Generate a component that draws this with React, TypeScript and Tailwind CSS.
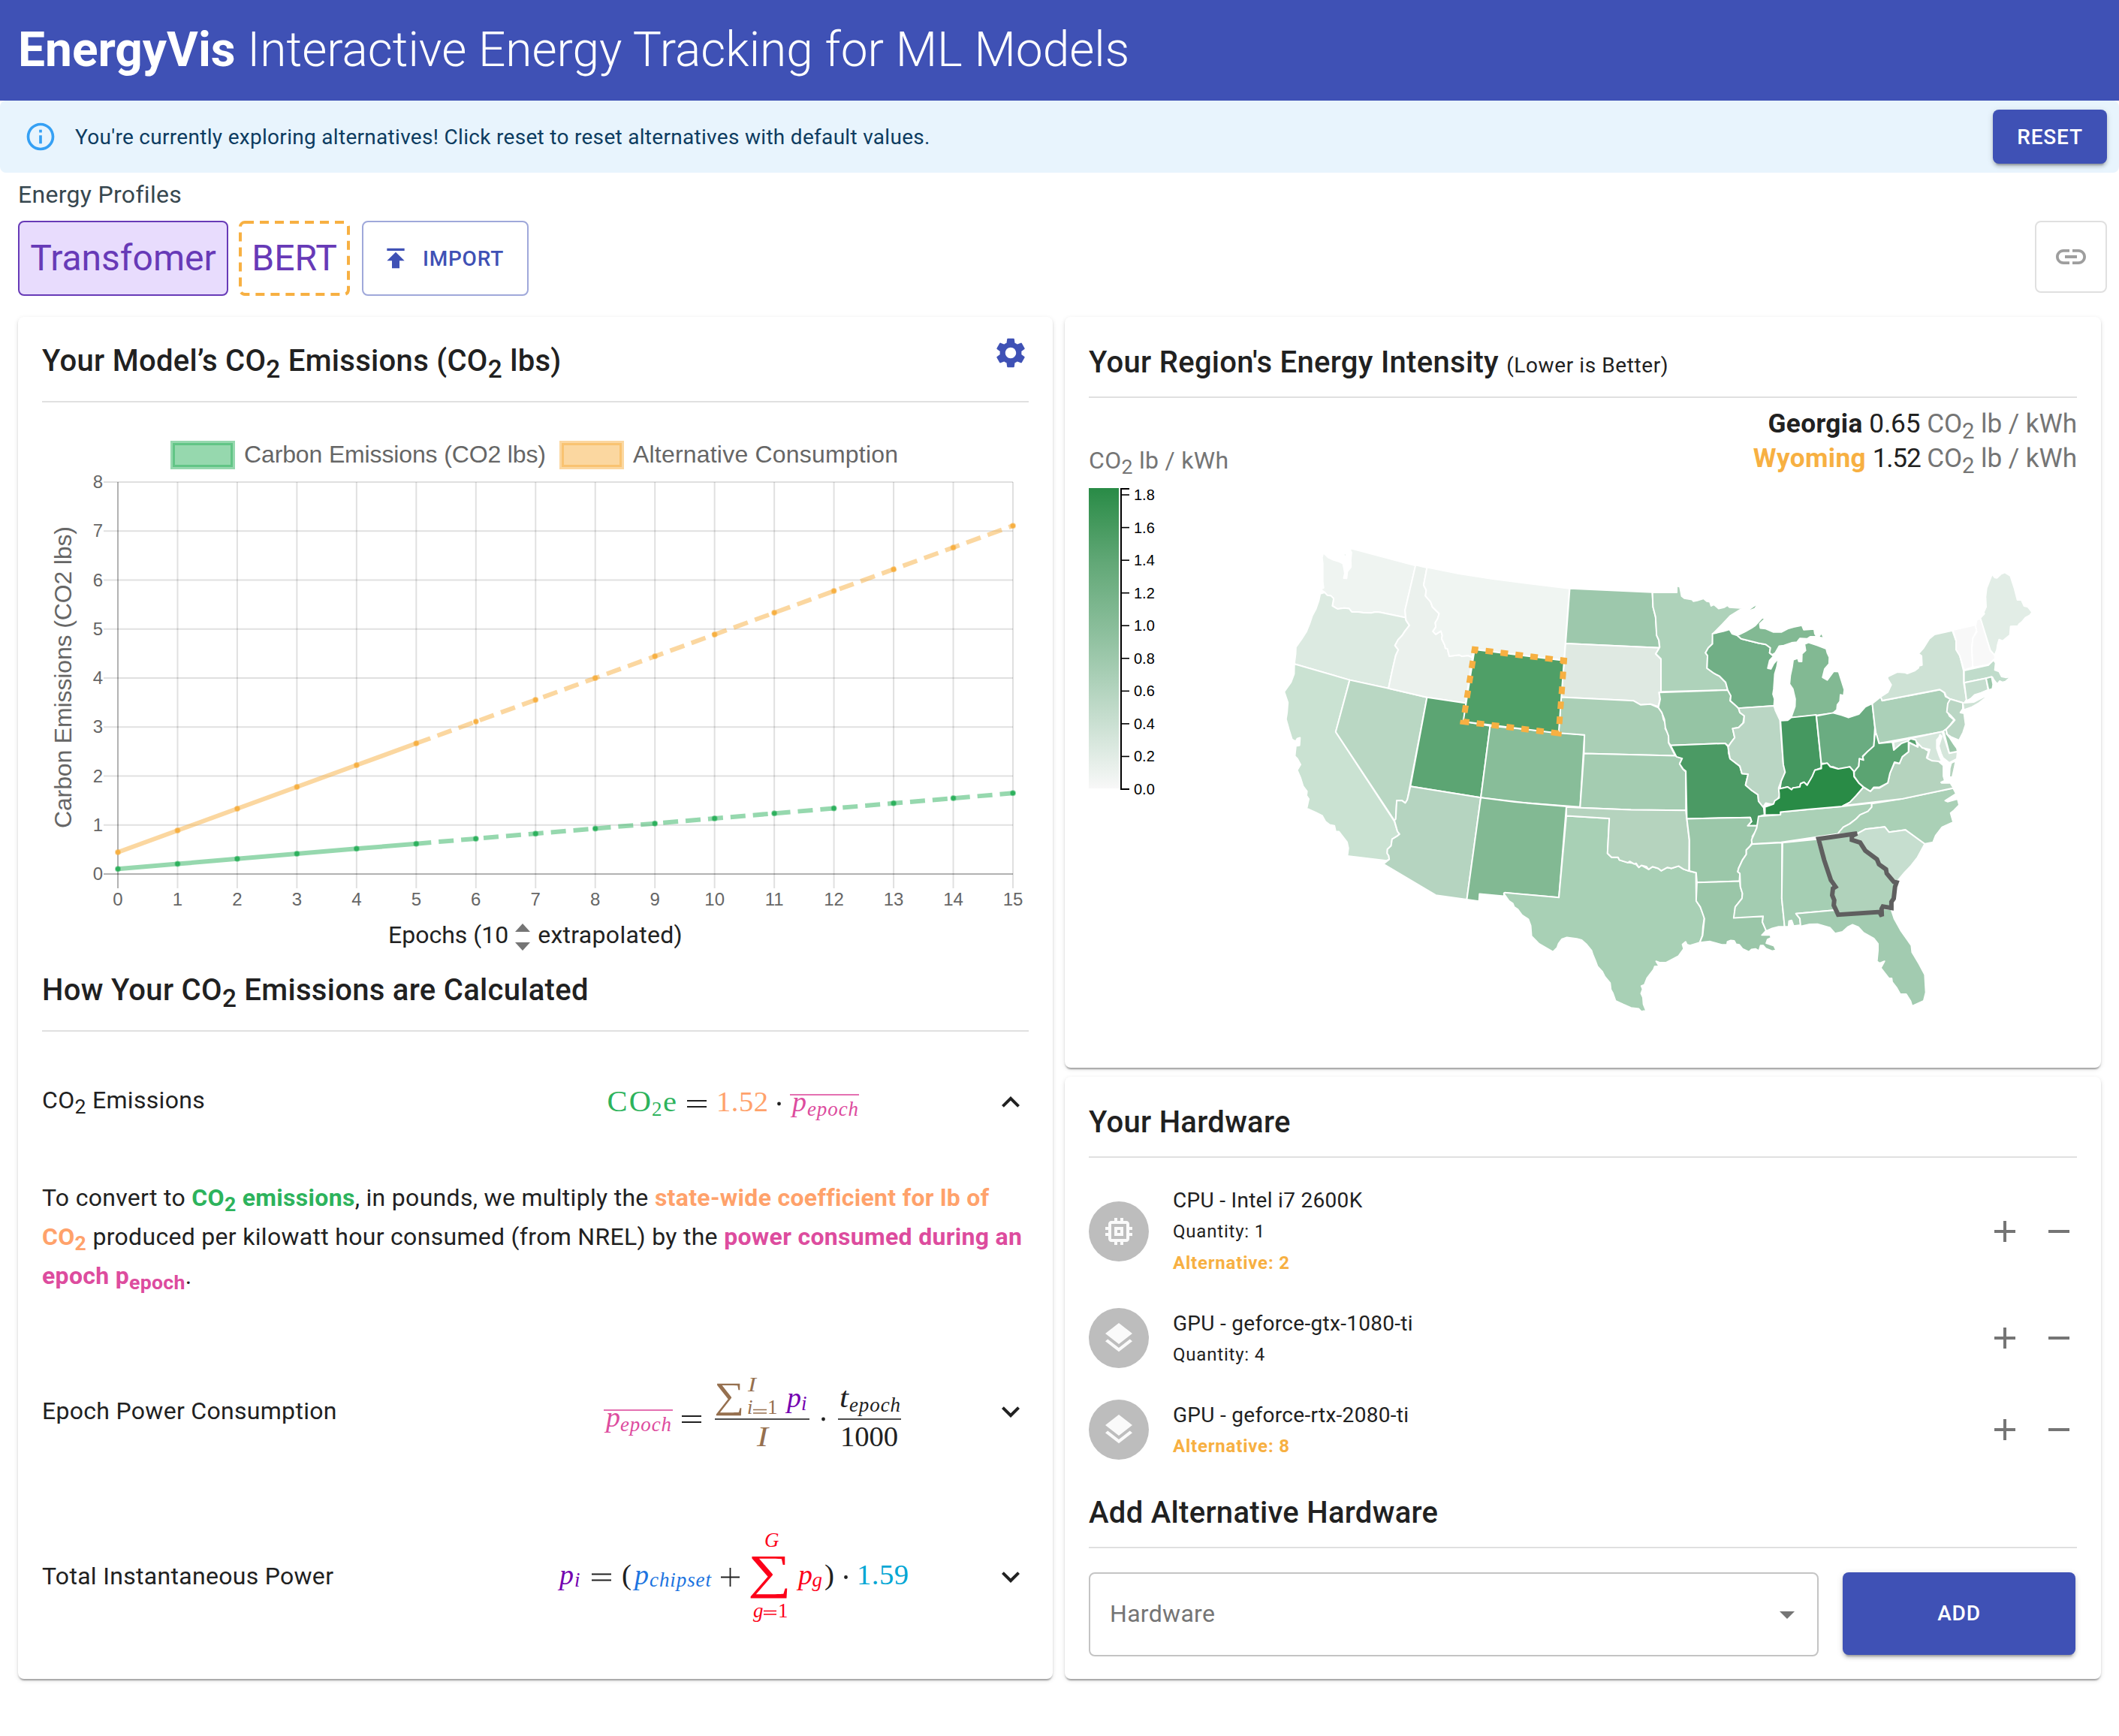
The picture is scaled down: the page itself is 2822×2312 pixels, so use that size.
import React from 'react';
import {
  MdAdd,
  MdArrowDropDown,
  MdExpandLess,
  MdExpandMore,
  MdInfoOutline,
  MdLayers,
  MdLink,
  MdMemory,
  MdPublish,
  MdRemove,
  MdSettings,
} from 'react-icons/md';

const cardShadow =
  'shadow-[0_4px_2px_-2px_rgba(0,0,0,0.2),0_2px_2px_0_rgba(0,0,0,0.14),0_2px_6px_0_rgba(0,0,0,0.12)]';
const buttonShadow =
  'shadow-[0_6px_2px_-4px_rgba(0,0,0,0.2),0_4px_4px_0_rgba(0,0,0,0.14),0_2px_10px_0_rgba(0,0,0,0.12)]';

function Sub({ children }: { children: React.ReactNode }) {
  return <sub className="static align-sub text-[0.8333em] leading-[0]">{children}</sub>;
}

/* ---------------------------------------------------------------- chart */

const PLOT = { left: 157, right: 1349, top: 642, bottom: 1164 };
const px = (n: number) => PLOT.left + ((PLOT.right - PLOT.left) / 15) * n;
const py = (v: number) => PLOT.bottom - ((PLOT.bottom - PLOT.top) / 8) * v;
const epochs = Array.from({ length: 16 }, (_, i) => i);

function Series({ perEpoch, color }: { perEpoch: number; color: string }) {
  const pts = epochs.map((n) => [px(n), py(perEpoch * (n + 1))]);
  const join = (list: number[][]) => list.map((p) => p.join(',')).join(' ');
  return (
    <g>
      <polyline points={join(pts.slice(0, 6))} fill="none" stroke={color} strokeOpacity={0.5} strokeWidth={6} />
      <polyline
        points={join(pts.slice(5))}
        fill="none"
        stroke={color}
        strokeOpacity={0.5}
        strokeWidth={6}
        strokeDasharray="20 10"
      />
      {pts.map(([x, y]) => (
        <circle key={x} cx={x} cy={y} r={3} fill={color} stroke={color} strokeOpacity={0.5} strokeWidth={2} />
      ))}
    </g>
  );
}

function EmissionsChart() {
  return (
    <svg
      viewBox="56 536 1314 680"
      className="block h-[680px] w-[1314px] shrink-0"
      fontFamily='"Liberation Sans", sans-serif'
      fill="#666666"
    >
      <rect x={230} y={590} width={80} height={32} fill="#2db15d" fillOpacity={0.5} stroke="#2db15d" strokeOpacity={0.5} strokeWidth={6} />
      <text x={325} y={616} fontSize={32} textLength={402}>
        Carbon Emissions (CO2 lbs)
      </text>
      <rect x={748} y={590} width={80} height={32} fill="#f7b042" fillOpacity={0.5} stroke="#f7b042" strokeOpacity={0.5} strokeWidth={6} />
      <text x={843} y={616} fontSize={32} textLength={353}>
        Alternative Consumption
      </text>
      {epochs.map((n) => (
        <g key={n}>
          <line x1={px(n)} x2={px(n)} y1={PLOT.top} y2={PLOT.bottom + 19} stroke="#000" strokeOpacity={n ? 0.12 : 0.3} strokeWidth={2} />
          <text x={px(n)} y={1206} fontSize={24} textAnchor="middle">
            {n}
          </text>
        </g>
      ))}
      {epochs.slice(0, 9).map((n) => (
        <g key={n}>
          <line x1={PLOT.left - 19} x2={PLOT.right} y1={py(n)} y2={py(n)} stroke="#000" strokeOpacity={n ? 0.12 : 0.3} strokeWidth={2} />
          <text x={137} y={py(n) + 8} fontSize={24} textAnchor="end">
            {n}
          </text>
        </g>
      ))}
      <text transform="translate(95 1103) rotate(-90)" fontSize={32} textLength={402}>
        Carbon Emissions (CO2 lbs)
      </text>
      <Series perEpoch={0.4443} color="#f7b042" />
      <Series perEpoch={0.1031} color="#2db15d" />
    </svg>
  );
}

/* ------------------------------------------------------------- formulas */

type Glyph = {
  t: string;
  x: number;
  y: number;
  w?: number;
  s?: number;
  c?: string;
  i?: boolean;
};

const INK = '#212121';
const GREEN = '#2db35c';
const CORAL = '#ffa26b';
const PINK = '#dd4c9e';
const VIOLET = '#7400b0';
const BROWN = '#96704f';
const BLUE = '#1c74e0';
const RED = '#fc0019';
const CYAN = '#00a6d4';

function Glyphs({ items }: { items: Glyph[] }) {
  return (
    <>
      {items.map((g, k) => (
        <text
          key={k}
          x={g.x}
          y={g.y}
          fontSize={g.s ?? 38.7}
          fill={g.c ?? INK}
          fontStyle={g.i ? 'italic' : 'normal'}
          textLength={g.w}
          lengthAdjust={g.t.length > 1 ? 'spacing' : 'spacingAndGlyphs'}
        >
          {g.t}
        </text>
      ))}
    </>
  );
}

function Formula({ top, height, children }: { top: number; height: number; children: React.ReactNode }) {
  return (
    <svg
      viewBox={`730 ${top} 500 ${height}`}
      width={500}
      height={height}
      className="shrink-0 overflow-visible"
      fontFamily='"Liberation Serif", serif'
    >
      {children}
    </svg>
  );
}

function Equals({ x, y }: { x: number; y: number }) {
  return <path d={`M${x} ${y - 4}h26M${x} ${y + 4}h26`} stroke={INK} strokeWidth={1.8} />;
}

function EmissionsFormula() {
  return (
    <Formula top={1374} height={182}>
      <Glyphs
        items={[
          { t: 'CO', x: 808.5, y: 1480, s: 40.5, w: 58.5, c: GREEN },
          { t: '2', x: 868, y: 1486, s: 27, c: GREEN },
          { t: 'e', x: 883, y: 1480, w: 18, c: GREEN },
          { t: '1.52', x: 954, y: 1480, w: 69, c: CORAL },
          { t: 'p', x: 1055, y: 1480, w: 19, c: PINK, i: true },
          { t: 'epoch', x: 1075, y: 1486, s: 27, w: 68, c: PINK, i: true },
        ]}
      />
      <Equals x={915} y={1470} />
      <circle cx={1037.5} cy={1470} r={2.4} fill={INK} />
      <path d="M1052 1458h92" stroke={PINK} strokeWidth={2} strokeOpacity={0.8} />
    </Formula>
  );
}

function EpochFormula() {
  return (
    <Formula top={1760} height={238}>
      <Glyphs
        items={[
          { t: 'p', x: 807, y: 1900, w: 19, c: PINK, i: true },
          { t: 'epoch', x: 826, y: 1906, s: 27, w: 68, c: PINK, i: true },
          { t: 'I', x: 996, y: 1853, s: 27, w: 11, c: BROWN, i: true },
          { t: 'i', x: 995, y: 1883, s: 27, c: BROWN, i: true },
          { t: '1', x: 1022, y: 1883, s: 27, c: BROWN },
          { t: 'p', x: 1048, y: 1874, w: 19, c: VIOLET, i: true },
          { t: 'i', x: 1067, y: 1878, s: 27, c: VIOLET, i: true },
          { t: 'I', x: 1008, y: 1926, w: 15, c: BROWN, i: true },
          { t: 't', x: 1118, y: 1874, w: 12, i: true },
          { t: 'epoch', x: 1131, y: 1880, s: 27, w: 68, i: true },
          { t: '1000', x: 1119, y: 1926, w: 77 },
        ]}
      />
      <path d="M1003 1877.500h18M1003 1882h18" stroke={BROWN} strokeWidth={1.4} />
      <text transform="translate(951.500 1874.500) scale(1.4 1.24)" fontSize={40} fill={BROWN}>
        ∑
      </text>
      <Equals x={908} y={1890} />
      <path d="M804 1878h92" stroke={PINK} strokeWidth={2} strokeOpacity={0.8} />
      <path d="M952 1890h126M1116 1890h84" stroke={INK} strokeWidth={2} strokeOpacity={0.8} />
      <circle cx={1096.5} cy={1890} r={2.4} fill={INK} />
    </Formula>
  );
}

function PowerFormula() {
  return (
    <Formula top={1998} height={202}>
      <Glyphs
        items={[
          { t: 'p', x: 745, y: 2110, w: 19, c: VIOLET, i: true },
          { t: 'i', x: 765, y: 2113, s: 27, c: VIOLET, i: true },
          { t: '(', x: 828, y: 2110, w: 13 },
          { t: 'p', x: 845, y: 2110, w: 19, c: BLUE, i: true },
          { t: 'chipset', x: 865, y: 2113, s: 27, w: 82, c: BLUE, i: true },
          { t: 'G', x: 1018, y: 2060, s: 27, c: RED, i: true },
          { t: 'g', x: 1003, y: 2154, s: 27, c: RED, i: true },
          { t: '1', x: 1036, y: 2154, s: 27, c: RED },
          { t: 'p', x: 1063, y: 2110, w: 19, c: RED, i: true },
          { t: 'g', x: 1081.5, y: 2113, s: 27, c: RED, i: true },
          { t: ')', x: 1098, y: 2110, w: 13 },
          { t: '1.59', x: 1141, y: 2110, w: 69, c: CYAN },
        ]}
      />
      <Equals x={788} y={2100.5} />
      <path d="M960 2100.500h25M972.500 2088v25" stroke={INK} strokeWidth={1.8} />
      <path d="M1017 2145.500h17M1017 2150h17" stroke={RED} strokeWidth={1.4} />
      <text transform="translate(996 2114.500) scale(1.45 1.15)" fontSize={56} fill={RED}>
        ∑
      </text>
      <circle cx={1126.5} cy={2100.5} r={2.4} fill={INK} />
    </Formula>
  );
}

/* ------------------------------------------------------------------ map */

type Region = [id: string, fill: string, points: string];

const WEST: Region[] = [
  ['WA', '#eff4f1', '210,103 230,118 250,125 272,130 286,136 290,150 293,165 289,179 300,180 303,160 317,146 316,125 319,103 310,89 567,142 526,275 528,297 430,281 412,280 395,283 365,282 345,280 320,280 310,270 290,268 265,271 245,262 250,240 240,232 225,230 215,221 199,213 211,208 208,190 208,135 205,118'],
  ['OR', '#dceae1', '198,226 215,222 225,230 240,232 250,240 245,262 265,271 290,268 310,270 320,280 345,280 365,282 395,283 412,280 430,281 528,297 530,305 543,320 525,338 515,350 500,362 487,380 500,393 490,410 475,460 462,508 312,483 98,435 103,405 104,385 127,360 145,338 157,315 167,292 182,270 193,245'],
  ['CA', '#cae2d2', '98,435 97,465 85,490 59,518 73,550 70,580 66,600 77,630 89,660 103,666 109,658 120,655 118,678 104,680 100,710 109,717 122,735 109,752 122,775 132,800 147,815 145,828 154,838 146,866 180,878 206,888 218,905 235,915 253,918 258,935 270,935 288,953 302,967 307,985 303,1008 455,1022 465,1018 463,1007 457,1000 458,988 472,978 476,958 495,949 505,943 497,935 485,905 258,638 312,483'],
  ['NV', '#b9d7c3', '312,483 462,508 611,535 545,800 535,840 527,850 515,843 494,843 490,898 485,902 258,638'],
  ['ID', '#ebf1ed', '567,140 611,148 598,200 608,215 605,232 625,250 632,265 658,285 652,300 643,312 645,325 634,338 645,347 665,337 670,350 668,360 680,380 682,388 690,390 697,412 735,408 745,412 770,410 785,415 788,410 760,552 611,535 462,508 475,460 490,410 500,393 487,380 500,362 515,350 525,338 543,320 530,305 526,275'],
  ['MT', '#f0f5f2', '611,147 730,165 860,181 1000,195 1162,210 1141,425 795,392 785,415 770,410 745,412 735,408 697,412 690,390 682,388 680,380 668,360 670,350 665,337 645,347 634,338 645,325 643,312 652,300 658,285 632,265 625,250 605,232 608,215 598,200'],
  ['UT', '#5ca573', '611,535 762,552 753,607 855,620 819,834 547,800'],
  ['CO', '#88bd99', '855,620 1220,647 1203,862 1000,850 819,834'],
  ['AZ', '#b5d4c0', '547,800 819,834 765,1138 645,1125 442,1032 465,1018 463,1007 457,1000 458,988 472,978 476,958 495,949 505,943 497,935 485,902 490,898 494,843 515,843 527,850 535,840'],
  ['NM', '#82b993', '819,834 950,847 1150,860 1121,1132 910,1118 908,1128 814,1121 812,1143 765,1138'],
  ['ND', '#9dc8ac', '1163,210 1482,221 1485,265 1495,295 1500,350 1508,365 1510,387 1147,374'],
  ['SD', '#dfe9e2', '1147,374 1510,387 1495,405 1517,422 1517,520 1508,520 1512,540 1505,562 1475,555 1435,557 1410,545 1130,534'],
  ['NE', '#aacfb6', '1130,534 1410,545 1437,557 1475,555 1505,565 1520,580 1525,600 1535,615 1532,628 1545,645 1545,670 1571,709 1218,702 1220,647 1120,641'],
  ['KS', '#a4ccb1', '1218,702 1571,709 1598,717 1588,733 1600,748 1612,757 1612,872 1400,870 1203,864'],
  ['TX', '#a8d0b5', '1150,888 1316,896 1309,1000 1325,1012 1350,1012 1355,1020 1395,1028 1415,1030 1430,1042 1440,1036 1468,1048 1483,1040 1505,1045 1517,1052 1541,1042 1556,1045 1584,1038 1602,1047 1624,1053 1651,1058 1652,1140 1668,1160 1684,1190 1678,1220 1676,1245 1666,1266 1628,1275 1616,1272 1611,1264 1599,1272 1604,1285 1583,1307 1536,1326 1510,1326 1497,1322 1509,1337 1492,1337 1487,1347 1462,1372 1452,1392 1440,1396 1445,1405 1439,1418 1446,1430 1448,1450 1458,1469 1440,1472 1430,1464 1400,1461 1370,1451 1340,1440 1329,1416 1322,1407 1319,1387 1298,1367 1288,1352 1270,1337 1262,1320 1252,1302 1247,1290 1228,1272 1209,1259 1190,1255 1152,1251 1133,1256 1120,1269 1114,1282 1098,1294 1044,1270 1028,1257 1015,1247 1012,1216 1003,1197 978,1184 962,1167 948,1160 943,1150 928,1142 908,1120 912,1117 1121,1132'],
  ['OK', '#b5d3be', '1150,862 1203,864 1400,870 1612,872 1616,900 1625,960 1624,1053 1602,1047 1584,1038 1556,1045 1541,1042 1517,1052 1505,1045 1483,1040 1468,1048 1460,1040 1440,1036 1430,1042 1420,1030 1412,1032 1395,1024 1388,1028 1355,1020 1350,1012 1325,1012 1309,1000 1316,896 1150,888'],
];

const EAST: Region[] = [
  ['MN', '#aed2ba', '2,222 96,222 96,202 108,205 115,233 125,239 155,243 160,248 175,246 200,240 212,248 224,250 229,262 240,258 258,270 280,266 292,260 300,266 350,269 302,292 272,317 236,345 234,375 218,387 207,402 215,410 213,448 240,463 262,472 285,490 293,513 35,518 35,420 15,405 30,385 27,365 18,350 14,295 4,265'],
  ['IA', '#95c4a4', '28,520 293,513 305,530 302,545 325,560 335,568 340,580 357,590 352,612 335,625 312,628 320,655 308,667 296,680 283,672 72,678 65,670 64,650 52,625 48,600 38,580 25,565 32,540'],
  ['MO', '#4b9a64', '72,678 283,672 296,683 296,700 302,718 340,740 348,762 372,764 362,795 385,812 410,825 412,840 432,862 435,885 415,890 412,905 407,918 370,918 385,905 380,893 135,897 131,755 120,748 107,733 117,717 95,712'],
  ['AR', '#9bc7a9', '135,897 380,893 385,905 370,918 408,918 400,935 388,950 390,965 380,978 365,990 365,1003 350,1020 335,1045 332,1055 340,1060 338,1083 174,1087 171,1058 145,1053 145,960'],
  ['LA', '#9ac6a8', '174,1087 340,1083 342,1100 350,1120 348,1135 322,1160 320,1190 430,1188 427,1205 438,1222 442,1230 430,1240 425,1244 457,1243 461,1252 447,1257 442,1268 472,1276 480,1289 465,1292 440,1284 430,1275 420,1275 414,1291 400,1285 385,1287 375,1294 350,1285 338,1273 325,1271 318,1261 305,1260 292,1264 290,1273 270,1273 225,1263 185,1266 196,1245 203,1195 187,1160 171,1142'],
  ['WI', '#71af86', '234,345 275,338 300,332 310,345 330,350 345,360 412,373 440,377 458,387 455,402 470,412 455,425 448,448 460,450 470,435 489,418 483,445 475,465 471,510 468,525 474,540 472,560 335,567 325,560 303,545 305,530 293,513 285,490 262,472 240,463 213,448 215,410 207,402 218,387 234,375'],
  ['MI-upper', '#82b993', '330,350 362,338 385,328 400,320 430,294 435,302 417,315 419,328 440,330 470,340 500,340 525,330 548,325 580,320 587,333 627,331 630,345 637,354 612,354 600,360 572,359 561,370 540,372 510,380 492,382 477,402 465,408 455,402 458,387 440,377 412,373 345,360'],
  ['MI-lower', '#82b993', '590,376 605,371 640,380 674,390 678,402 686,415 685,435 668,450 660,475 678,483 703,457 722,458 733,485 744,512 741,530 729,527 727,547 717,557 715,572 700,582 640,588 538,595 553,562 554,540 545,510 532,495 535,470 542,445 546,423 564,418 568,428 579,428 580,405 594,395'],
  ['IL', '#bad6c4', '335,567 472,560 478,575 495,603 508,735 515,758 500,785 490,805 495,828 470,855 440,850 430,862 412,845 410,825 385,812 362,797 372,764 348,762 340,740 302,718 294,683 308,667 320,655 312,628 335,625 355,610 357,590 340,580'],
  ['IN', '#459860', '497,604 525,603 538,595 635,587 655,735 655,745 630,752 620,775 605,790 600,797 588,788 575,792 572,802 545,805 540,810 525,802 495,808 500,785 515,758 508,735'],
  ['OH', '#6aac81', '636,590 700,581 735,588 760,595 800,585 825,563 852,553 862,625 860,655 858,680 845,690 832,698 815,710 818,722 802,718 800,740 782,757 765,742 745,748 720,748 700,742 690,742 678,732 655,732'],
  ['TN', '#aad0b6', '412,890 497,885 497,877 735,860 850,850 850,862 835,875 805,885 790,897 765,912 740,922 725,940 718,942 500,967 387,972 385,960 405,925'],
  ['KY', '#298b46', '437,886 437,862 470,853 475,843 492,835 492,822 490,808 525,802 540,810 545,805 572,802 575,792 588,788 600,797 620,770 630,752 655,747 655,735 678,731 690,742 720,748 765,742 780,755 782,772 800,790 818,803 790,828 765,848 735,860 600,869 497,877 497,885'],
  ['MS', '#a3ccb1', '387,973 503,968 502,1135 513,1219 490,1219 465,1224 442,1232 427,1205 430,1188 316,1193 322,1160 348,1135 350,1120 342,1100 340,1060 332,1055 335,1045 350,1020 365,1003 365,990'],
  ['AL', '#a5ceb3', '505,968 638,958 690,1085 700,1100 695,1125 705,1155 703,1170 557,1180 572,1195 575,1214 548,1217 540,1200 530,1202 528,1219 513,1219 502,1135'],
  ['FL', '#a2cbb0', '557,1180 703,1170 720,1183 888,1175 893,1187 893,1165 925,1167 937,1195 962,1230 1003,1275 1006,1295 1033,1330 1055,1362 1059,1415 1051,1440 1006,1456 1000,1441 983,1420 960,1420 947,1402 929,1384 927,1373 916,1373 885,1342 899,1322 880,1328 870,1322 874,1290 874,1270 858,1254 818,1237 798,1220 775,1213 757,1220 737,1234 708,1239 688,1222 640,1211 610,1212 575,1218 572,1195'],
  ['NC', '#aad0b6', '850,852 965,838 1165,806 1176,822 1134,843 1143,846 1182,838 1188,856 1168,872 1155,880 1165,907 1122,922 1097,947 1087,967 1053,972 980,930 917,937 900,921 825,928 797,940 718,943 725,935 740,922 765,912 790,897 805,885 835,875 850,862'],
  ['SC', '#c6decf', '797,940 825,928 900,921 917,937 980,930 1055,972 1027,1012 1002,1037 977,1057 948,1084 935,1080 905,1048 870,1020 825,992 805,968 772,955'],
  ['VA', '#b5d3be', '740,858 765,848 790,828 818,803 845,815 858,805 880,805 912,790 920,762 938,730 957,732 968,712 992,697 995,670 1028,683 1032,672 1058,690 1070,695 1062,715 1100,720 1127,738 1127,770 1132,783 1118,788 1120,790 1154,790 1166,805 965,838'],
  ['PA', '#abd0b8', '852,553 885,533 890,545 1115,512 1130,520 1135,532 1155,540 1145,555 1142,575 1150,590 1168,602 1155,615 1140,628 1125,637 878,672 866,640 862,620'],
];

const NORTHEAST: Region[] = [
  ['NY', '#cee2d5', '-19,484 20,465 50,467 60,471 89,460 104,449 107,440 119,437 117,401 105,392 125,369 148,332 169,315 240,299 255,340 255,375 270,400 285,460 286,510 297,575 288,588 325,585 370,562 373,568 347,588 316,606 286,616 282,588 232,573 215,562 210,548 190,535 -40,579 -46,564 -18,546 -4,516 -18,493'],
  ['VT', '#f8f8f8', '243,297 333,277 337,300 322,330 318,370 322,445 287,457 270,400 255,375 255,340'],
  ['NH', '#f8f8f8', '333,280 338,256 350,252 357,260 380,340 392,380 409,394 411,411 385,435 322,447 318,370 322,330 338,305'],
  ['ME', '#e2ede6', '352,249 368,232 365,227 375,205 373,165 377,130 399,74 410,88 418,89 434,74 450,67 472,81 488,130 500,177 516,177 527,201 542,205 559,226 550,238 532,248 517,266 507,273 502,281 473,283 470,317 457,328 441,341 427,335 421,356 418,376 409,398 392,378'],
  ['MA', '#c0dccb', '287,459 385,437 405,417 413,429 410,457 427,463 437,483 455,487 476,482 452,503 440,506 429,501 420,513 413,505 405,495 400,485 287,508'],
  ['CT', '#c6decf', '288,508 375,490 383,536 355,548 329,556 314,571 297,580'],
  ['RI', '#9dc8ac', '375,490 397,484 403,515 400,532 385,537'],
  ['NJ', '#bad6c4', '232,573 282,588 282,612 272,627 287,630 293,675 283,706 267,738 235,724 220,714 215,695 230,680 250,657 235,640 218,625 222,590'],
  ['MD', '#d5e6db', '5,745 200,703 228,790 261,783 258,812 228,828 203,808 195,790 186,760 198,722 191,715 187,726 178,736 178,770 188,800 198,823 160,820 140,810 150,775 120,768 98,745 65,740 25,762 8,780'],
  ['DE', '#9ac6a8', '205,700 215,695 217,712 230,728 247,754 258,769 261,782 228,788'],
  ['VA-shore', '#b5d3be', '254,820 248,850 240,885 228,884 230,850 236,828'],
];

const WEST_VIRGINIA =
  '782,757 800,740 802,718 818,722 815,712 832,698 858,680 862,645 868,645 878,672 930,668 935,692 965,672 990,665 1000,658 1020,662 1028,682 992,668 992,697 968,712 957,732 938,728 920,762 912,790 880,803 858,803 845,815 818,802 800,790 782,770';
const GEORGIA =
  '644,957 793,941 773,948 773,960 805,968 825,992 870,1018 878,1033 905,1048 908,1060 935,1085 946,1087 940,1100 935,1135 926,1145 926,1163 893,1159 888,1166 889,1188 880,1175 720,1183 703,1155 705,1140 697,1125 700,1105 710,1100 692,1080 666,1020';

function Regions({ regions }: { regions: Region[] }) {
  return (
    <>
      {regions.map(([id, fill, points]) => (
        <polygon
          key={id}
          points={points}
          fill={fill}
          stroke="#ffffff"
          strokeWidth={2}
          strokeLinejoin="round"
          vectorEffect="non-scaling-stroke"
        />
      ))}
    </>
  );
}

function IntensityMap() {
  return (
    <svg viewBox="1690 634 1076 760" className="ml-[120px] block h-[760px] w-[1076px] shrink-0">
      <g transform="translate(1690 690) scale(0.344388 0.446429)">
        <Regions regions={WEST} />
        <path d="M291,109 297,107 296,113z" fill="#eff4f1" />
        <polygon points="751,607 1120,642 1141,425 795,392" fill="#4f9f67" stroke="#fff" strokeWidth={2} vectorEffect="non-scaling-stroke" />
      </g>
      <g transform="translate(2200 690) scale(0.344388 0.446429)">
        <Regions regions={EAST} />
        <path d="M379,273 402,261 396,268z" fill="#82b993" />
        <path d="M649,354 655,347 660,355z" fill="#82b993" />
      </g>
      <g transform="translate(2520 740) scale(0.333333)">
        <Regions regions={NORTHEAST} />
      </g>
      <g transform="translate(2200 690) scale(0.344388 0.446429)">
        <Regions regions={[['WV', '#5ba472', WEST_VIRGINIA]]} />
        <polygon points={GEORGIA} fill="#b0d2bb" stroke="#5f5f5f" strokeWidth={6} vectorEffect="non-scaling-stroke" />
      </g>
      <g transform="translate(1690 690) scale(0.344388 0.446429)">
        <polygon
          points="1120,642 751,607 795,392 1141,425"
          fill="none"
          stroke="#f7b042"
          strokeWidth={8}
          strokeDasharray="10 10"
          vectorEffect="non-scaling-stroke"
        />
      </g>
    </svg>
  );
}

const scaleTicks = ['0.0', '0.2', '0.4', '0.6', '0.8', '1.0', '1.2', '1.4', '1.6', '1.8'];

function ColorScale() {
  return (
    <svg viewBox="1450 634 120 430" className="block h-[430px] w-[120px] shrink-0" fontFamily='"Liberation Sans", sans-serif' fontSize={20}>
      <defs>
        <linearGradient id="scale" x1="0" y1="0" x2="0" y2="1">
          <stop offset="0" stopColor="#298b46" />
          <stop offset="0.25" stopColor="#62a877" />
          <stop offset="0.5" stopColor="#90c1a0" />
          <stop offset="0.75" stopColor="#c3dccc" />
          <stop offset="1" stopColor="#f8f8f8" />
        </linearGradient>
      </defs>
      <rect x={1450} y={650} width={40} height={400} fill="url(#scale)" />
      <path d="M1504 651H1493V1051H1504" fill="none" stroke="#000" strokeWidth={2} />
      {scaleTicks.map((t, i) => {
        const y = 1051 - i * 43.55;
        return (
          <g key={t}>
            <path d={`M1493 ${y}H1504`} stroke="#000" strokeWidth={1.6} />
            <text x={1510} y={y + 7}>
              {t}
            </text>
          </g>
        );
      })}
    </svg>
  );
}

/* --------------------------------------------------------------- panels */

function CalculationRow({
  label,
  formula,
  open,
  className,
}: {
  label: React.ReactNode;
  formula: React.ReactNode;
  open?: boolean;
  className: string;
}) {
  return (
    <div className={`flex shrink-0 items-center ${className}`}>
      <div className="w-[674px] text-[32px] leading-12 tracking-[0.00938em]">{label}</div>
      {formula}
      {open ? <MdExpandLess className="mt-1.5 ml-auto size-12" /> : <MdExpandMore className="mt-0.5 ml-auto size-12" />}
    </div>
  );
}

function ModelCard() {
  return (
    <section className={`flex h-[1814px] w-[1378px] flex-col rounded-lg bg-white px-8 ${cardShadow}`}>
      <div className="flex h-[112px] shrink-0 items-start justify-between pt-[27px]">
        <h2 className="text-[40px] leading-16 font-medium tracking-[0.0075em]">
          Your Model’s CO<Sub>2</Sub> Emissions (CO<Sub>2</Sub> lbs)
        </h2>
        <MdSettings className="-mt-[3px] size-12 text-[#3f51b5]" />
      </div>
      <div className="h-0.5 shrink-0 bg-black/12" />
      <EmissionsChart />
      <div className="flex h-[58px] shrink-0 items-center justify-center text-[32px] tracking-[0.00938em]">
        <span className="tracking-normal">Epochs (10</span>
        <span className="mr-2.5 ml-[9px] flex flex-col gap-3.5 pt-1.5">
          <svg viewBox="0 0 20 11" className="h-[11px] w-5">
            <path d="M0 11 10 0 20 11z" fill="#757575" />
          </svg>
          <svg viewBox="0 0 20 11" className="h-[11px] w-5">
            <path d="M0 0 10 11 20 0z" fill="#757575" />
          </svg>
        </span>
        <span>extrapolated)</span>
      </div>
      <div className="h-[98px] shrink-0 pt-[13px]">
        <h2 className="text-[40px] leading-16 font-medium tracking-[0.0075em]">
          How Your CO<Sub>2</Sub> Emissions are Calculated
        </h2>
      </div>
      <div className="h-0.5 shrink-0 bg-black/12" />
      <CalculationRow
        className="h-[182px]"
        label={
          <>
            CO<Sub>2</Sub> Emissions
          </>
        }
        formula={<EmissionsFormula />}
        open
      />
      <p className="mt-[13px] text-[32px] leading-[52px] tracking-[0.00938em]">
        To convert to{' '}
        <b className="font-bold text-[#2db35c]">
          CO<Sub>2</Sub> emissions
        </b>
        , in pounds, we multiply the{' '}
        <b className="font-bold text-[#ffa26b]">
          state-wide coefficient for lb of
          <br />
          CO<Sub>2</Sub>
        </b>{' '}
        produced per kilowatt hour consumed (from NREL) by the{' '}
        <b className="font-bold text-[#dd4c9e]">
          power consumed during an
          <br />
          epoch p<Sub>epoch</Sub>
        </b>
        .
      </p>
      <CalculationRow className="mt-[35px] h-[238px]" label="Epoch Power Consumption" formula={<EpochFormula />} />
      <CalculationRow className="h-[202px]" label="Total Instantaneous Power" formula={<PowerFormula />} />
    </section>
  );
}

function RegionCard() {
  return (
    <section className={`flex h-[1000px] flex-col rounded-lg bg-white px-8 ${cardShadow}`}>
      <div className="h-[106px] shrink-0 pt-[29px]">
        <h2 className="text-[40px] leading-16 font-medium tracking-[0.0075em]">
          Your Region's Energy Intensity{' '}
          <span className="text-[28px] font-normal tracking-[0.6px]">(Lower is Better)</span>
        </h2>
      </div>
      <div className="h-0.5 shrink-0 bg-black/12" />
      <div className="flex h-[104px] shrink-0 items-end justify-between">
        <div className="text-[32px] leading-[42px] tracking-[0.00938em] text-[#757575]">
          CO<Sub>2</Sub> lb / kWh
        </div>
        <div className="pb-px text-right text-[35.2px] leading-[46px] tracking-[-0.1px]">
          <div>
            <b className="font-bold tracking-[0.01em]">Georgia</b> 0.65{' '}
            <span className="text-[#757575]">
              CO<Sub>2</Sub> lb / kWh
            </span>
          </div>
          <div>
            <b className="font-bold tracking-[0.01em] text-[#f7b042]">Wyoming</b>{' '}
            <span className="tracking-[-1.2px]">1.52</span>{' '}
            <span className="text-[#757575]">
              CO<Sub>2</Sub> lb / kWh
            </span>
          </div>
        </div>
      </div>
      <div className="flex">
        <ColorScale />
        <IntensityMap />
      </div>
    </section>
  );
}

function HardwareRow({
  kind,
  name,
  quantity,
  alternative,
  className,
}: {
  kind: 'cpu' | 'gpu';
  name: string;
  quantity?: number;
  alternative?: number;
  className: string;
}) {
  const Icon = kind === 'cpu' ? MdMemory : MdLayers;
  return (
    <div className={`flex shrink-0 items-center ${className}`}>
      <div className="flex size-20 items-center justify-center rounded-full bg-[#bdbdbd] text-[#fafafa]">
        <Icon className="size-12" />
      </div>
      <div className={kind === 'cpu' ? 'ml-8 flex-1 pt-px' : 'ml-8 flex-1 pt-[3px]'}>
        <div className="text-[28px] leading-10 tracking-[0.01071em]">{name}</div>
        {quantity !== undefined && (
          <div className="text-[24px] leading-[42px] tracking-[0.03333em]">Quantity: {quantity}</div>
        )}
        {alternative !== undefined && (
          <div className="text-[24px] leading-[42px] font-bold tracking-[0.03333em] text-[#f7b042]">
            Alternative: {alternative}
          </div>
        )}
      </div>
      <div className="flex gap-6 text-[#757575]">
        <MdAdd className="size-12" />
        <MdRemove className="size-12" />
      </div>
    </div>
  );
}

function HardwareCard() {
  return (
    <section className={`flex h-[802px] flex-col rounded-lg bg-white px-8 ${cardShadow}`}>
      <div className="h-[106px] shrink-0 pt-[29px]">
        <h2 className="text-[40px] leading-16 font-medium tracking-[0.0075em]">Your Hardware</h2>
      </div>
      <div className="mb-[17px] h-0.5 shrink-0 bg-black/12" />
      <HardwareRow className="h-[162px]" kind="cpu" name="CPU - Intel i7 2600K" quantity={1} alternative={2} />
      <HardwareRow className="h-[122px]" kind="gpu" name="GPU - geforce-gtx-1080-ti" quantity={4} />
      <HardwareRow className="h-[122px]" kind="gpu" name="GPU - geforce-rtx-2080-ti" alternative={8} />
      <div className="h-[95px] shrink-0 pt-[18px]">
        <h2 className="text-[40px] leading-16 font-medium tracking-[0.0075em]">Add Alternative Hardware</h2>
      </div>
      <div className="h-0.5 shrink-0 bg-black/12" />
      <div className="mt-8 flex items-start gap-8">
        <div className="flex h-28 w-[972px] items-center justify-between rounded-lg border-2 border-black/23 pr-4 pl-[26px] text-[#757575]">
          <span className="pb-0.5 text-[32px] tracking-[0.00938em]">Hardware</span>
          <MdArrowDropDown className="size-12" />
        </div>
        <button
          className={`h-[110px] w-[310px] rounded-lg bg-[#3f51b5] text-[28px] font-medium tracking-[0.02857em] text-white ${buttonShadow}`}
        >
          ADD
        </button>
      </div>
    </section>
  );
}

export default function App() {
  return (
    <div className="h-[2312px] w-[2822px] overflow-hidden bg-white font-[Roboto,sans-serif] text-[#212121]">
      <header className="flex h-[134px] items-center bg-[#3f51b5] pl-6 text-[64px] leading-none text-white">
        <h1 className="font-light">
          <b className="font-bold">EnergyVis</b> Interactive Energy Tracking for ML Models
        </h1>
      </header>

      <div className="flex h-24 items-center rounded-lg bg-[#e8f4fd] pr-4 pl-8 text-[#0d3c61]">
        <MdInfoOutline className="size-11 text-[#35a0f4]" />
        <span className="ml-6 pt-0.5 text-[28px] tracking-[0.01071em]">
          You're currently exploring alternatives! Click reset to reset alternatives with default values.
        </span>
        <button
          className={`ml-auto h-[72px] w-[152px] rounded-lg bg-[#3f51b5] pt-0.5 text-[28px] font-medium tracking-[0.02857em] text-white ${buttonShadow}`}
        >
          RESET
        </button>
      </div>

      <div className="px-6">
        <div className="h-16 text-[32px] leading-[58px] tracking-[0.00938em] text-[#37474f]">Energy Profiles</div>
        <div className="flex h-[100px] items-start">
          <div className="flex h-[100px] w-[280px] items-center justify-center rounded-lg border-2 border-[#673ab7] bg-[#e8dcfd] text-[48px] text-[#673ab7]">
            Transfomer
          </div>
          <div className="relative ml-3.5 flex h-[100px] w-[148px] items-center justify-center text-[48px] text-[#673ab7]">
            BERT
            <svg viewBox="0 0 148 100" className="absolute inset-0 size-full">
              <rect x={2} y={2} width={144} height={96} rx={6} fill="none" stroke="#f7b042" strokeWidth={4} strokeDasharray="12 8" />
            </svg>
          </div>
          <button className="ml-4 flex h-[100px] w-[222px] items-center justify-center gap-4 rounded-lg border-2 border-[#3f51b5]/50 pr-2 text-[28px] font-medium tracking-[0.02857em] text-[#3f51b5]">
            <MdPublish className="size-10" />
            <span className="pt-0.5">IMPORT</span>
          </button>
          <div className="-mr-2 ml-auto flex size-24 items-center justify-center rounded-lg border-2 border-[#e0e0e0] text-[#9e9e9e]">
            <MdLink className="size-12" />
          </div>
        </div>
      </div>

      <main className="mt-7 flex gap-4 px-6">
        <ModelCard />
        <div className="flex w-[1380px] flex-col gap-3">
          <RegionCard />
          <HardwareCard />
        </div>
      </main>
    </div>
  );
}
